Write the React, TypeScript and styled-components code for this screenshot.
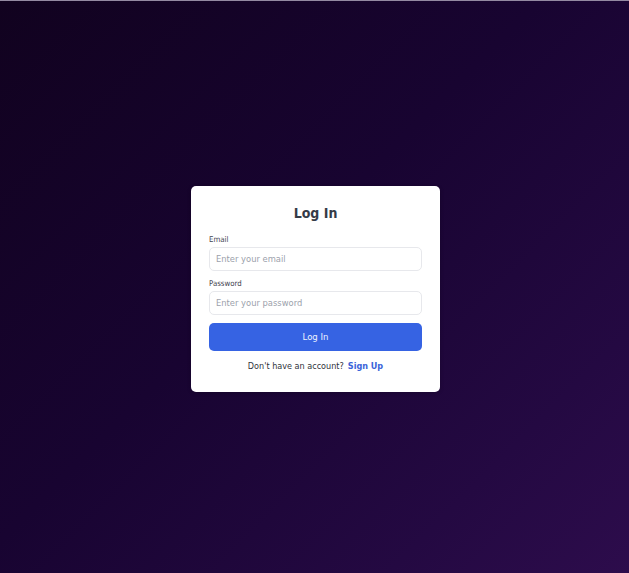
import styled, { createGlobalStyle } from 'styled-components';

const GlobalStyle = createGlobalStyle`
  html, body {
    margin: 0;
    padding: 0;
  }

  body {
    font-family: 'DejaVu Sans Condensed', 'DejaVu Sans', sans-serif;
    font-stretch: condensed;
  }

  * {
    box-sizing: border-box;
  }
`;

const Page = styled.main`
  min-height: 573px;
  display: flex;
  align-items: center;
  justify-content: center;
  padding: 3px 0 0 2px;
  border-top: 1px solid #948aa2;
  background: linear-gradient(135deg, #11021f 0%, #180431 45%, #240942 80%, #2d0c4c 100%);
`;

const Card = styled.form`
  width: 249px;
  padding: 18px 18px 20px;
  background: #ffffff;
  border-radius: 5px;
  box-shadow: 0 1px 4px rgba(0, 0, 0, 0.2);
`;

const Title = styled.h1`
  margin: 0 0 13px;
  font-size: 14px;
  line-height: 18px;
  font-weight: bold;
  text-align: center;
  color: #353b47;
`;

const Field = styled.div`
  display: flex;
  flex-direction: column;
  gap: 2px;
  margin-bottom: 8px;
`;

const Label = styled.label`
  font-size: 7.8px;
  line-height: 10px;
  color: #3f4450;
`;

const Input = styled.input`
  width: 100%;
  height: 24px;
  padding: 0 6px;
  border: 1px solid #e7e8ec;
  border-radius: 5px;
  font-family: inherit;
  font-stretch: condensed;
  font-size: 9.3px;
  color: #333;
  background: #fff;
  outline: none;

  &::placeholder {
    color: #9ba1ab;
  }
`;

const Submit = styled.button`
  display: block;
  width: 100%;
  height: 28px;
  margin-top: 8px;
  border: 0;
  border-radius: 5px;
  background: #3663e3;
  color: #eef2ff;
  font-family: inherit;
  font-stretch: condensed;
  font-size: 9.5px;
  cursor: pointer;
`;

const Footer = styled.p`
  margin: 9px 0 0;
  font-size: 9px;
  line-height: 12px;
  text-align: center;
  color: #2f333b;

  a {
    margin-left: 4px;
    font-weight: bold;
    color: #3a63d9;
    text-decoration: none;
  }
`;

export default function App() {
  return (
    <>
      <GlobalStyle />
      <Page>
        <Card onSubmit={(e) => e.preventDefault()}>
          <Title>Log In</Title>
          <Field>
            <Label htmlFor='email'>Email</Label>
            <Input id='email' type='email' placeholder='Enter your email' />
          </Field>
          <Field>
            <Label htmlFor='password'>Password</Label>
            <Input id='password' type='password' placeholder='Enter your password' />
          </Field>
          <Submit type='submit'>Log In</Submit>
          <Footer>
            Don't have an account?<a href='#'>Sign Up</a>
          </Footer>
        </Card>
      </Page>
    </>
  );
}
